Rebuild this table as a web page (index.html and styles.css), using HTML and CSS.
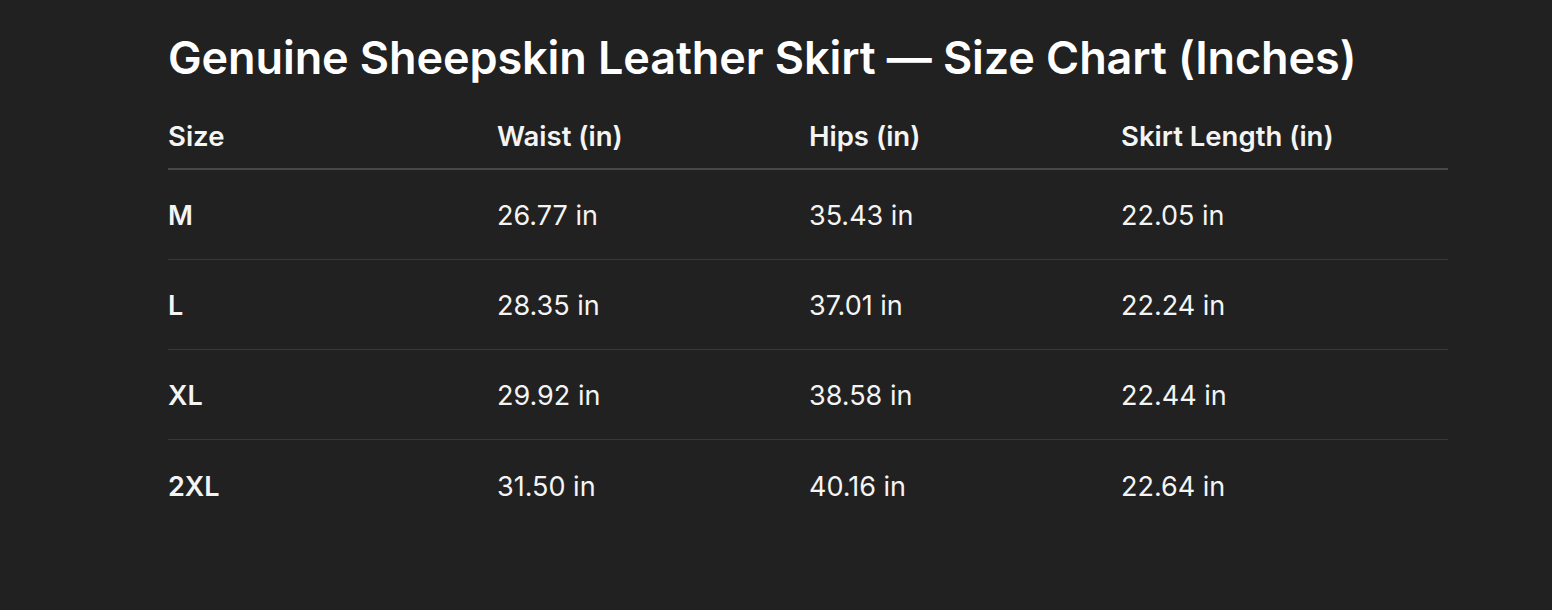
FILE: index.html
```html
<!DOCTYPE html>
<html>
<head>
<meta charset="utf-8">
<link rel="stylesheet" href="styles.css">
</head>
<body>
<main class="page">
  <h1 class="title">Genuine Sheepskin Leather Skirt — Size Chart (Inches)</h1>
  <div class="table">
    <div class="row head">
      <div class="cell">Size</div>
      <div class="cell">Waist (in)</div>
      <div class="cell">Hips (in)</div>
      <div class="cell">Skirt Length (in)</div>
    </div>
    <div class="row">
      <div class="cell size">M</div>
      <div class="cell">26.77 in</div>
      <div class="cell">35.43 in</div>
      <div class="cell">22.05 in</div>
    </div>
    <div class="row">
      <div class="cell size">L</div>
      <div class="cell">28.35 in</div>
      <div class="cell">37.01 in</div>
      <div class="cell">22.24 in</div>
    </div>
    <div class="row">
      <div class="cell size">XL</div>
      <div class="cell">29.92 in</div>
      <div class="cell">38.58 in</div>
      <div class="cell">22.44 in</div>
    </div>
    <div class="row last">
      <div class="cell size">2XL</div>
      <div class="cell">31.50 in</div>
      <div class="cell">40.16 in</div>
      <div class="cell">22.64 in</div>
    </div>
  </div>
</main>
</body>
</html>
```

FILE: styles.css
```css
html, body {
  margin: 0;
  padding: 0;
  background: #212121;
}
body {
  width: 1552px;
  height: 610px;
  overflow: hidden;
  font-family: Inter, "Noto Sans", "Liberation Sans", sans-serif;
  color: #f4f4f4;
}
.page {
  padding: 30px 0 0 168px;
  width: 1280px;
}
.title {
  margin: 0;
  font-size: 45px;
  font-weight: 600;
  line-height: 56px;
  letter-spacing: -0.1px;
  color: #ffffff;
}
.table {
  margin-top: 18px;
  display: flex;
  flex-direction: column;
}
.row {
  display: grid;
  grid-template-columns: 329px 312px 312px 327px;
  height: 89px;
  align-items: center;
  border-bottom: 1px solid #383838;
  font-size: 27px;
  padding-top: 2px;
  box-sizing: border-box;
  height: 90px;
}
.row.head {
  height: 66px;
  padding-top: 0;
  border-bottom: 2px solid #484848;
  font-weight: 600;
  font-size: 27.5px;
}
.row.last {
  border-bottom: none;
}
.cell {
  white-space: nowrap;
}
.size {
  font-weight: 600;
}
```
